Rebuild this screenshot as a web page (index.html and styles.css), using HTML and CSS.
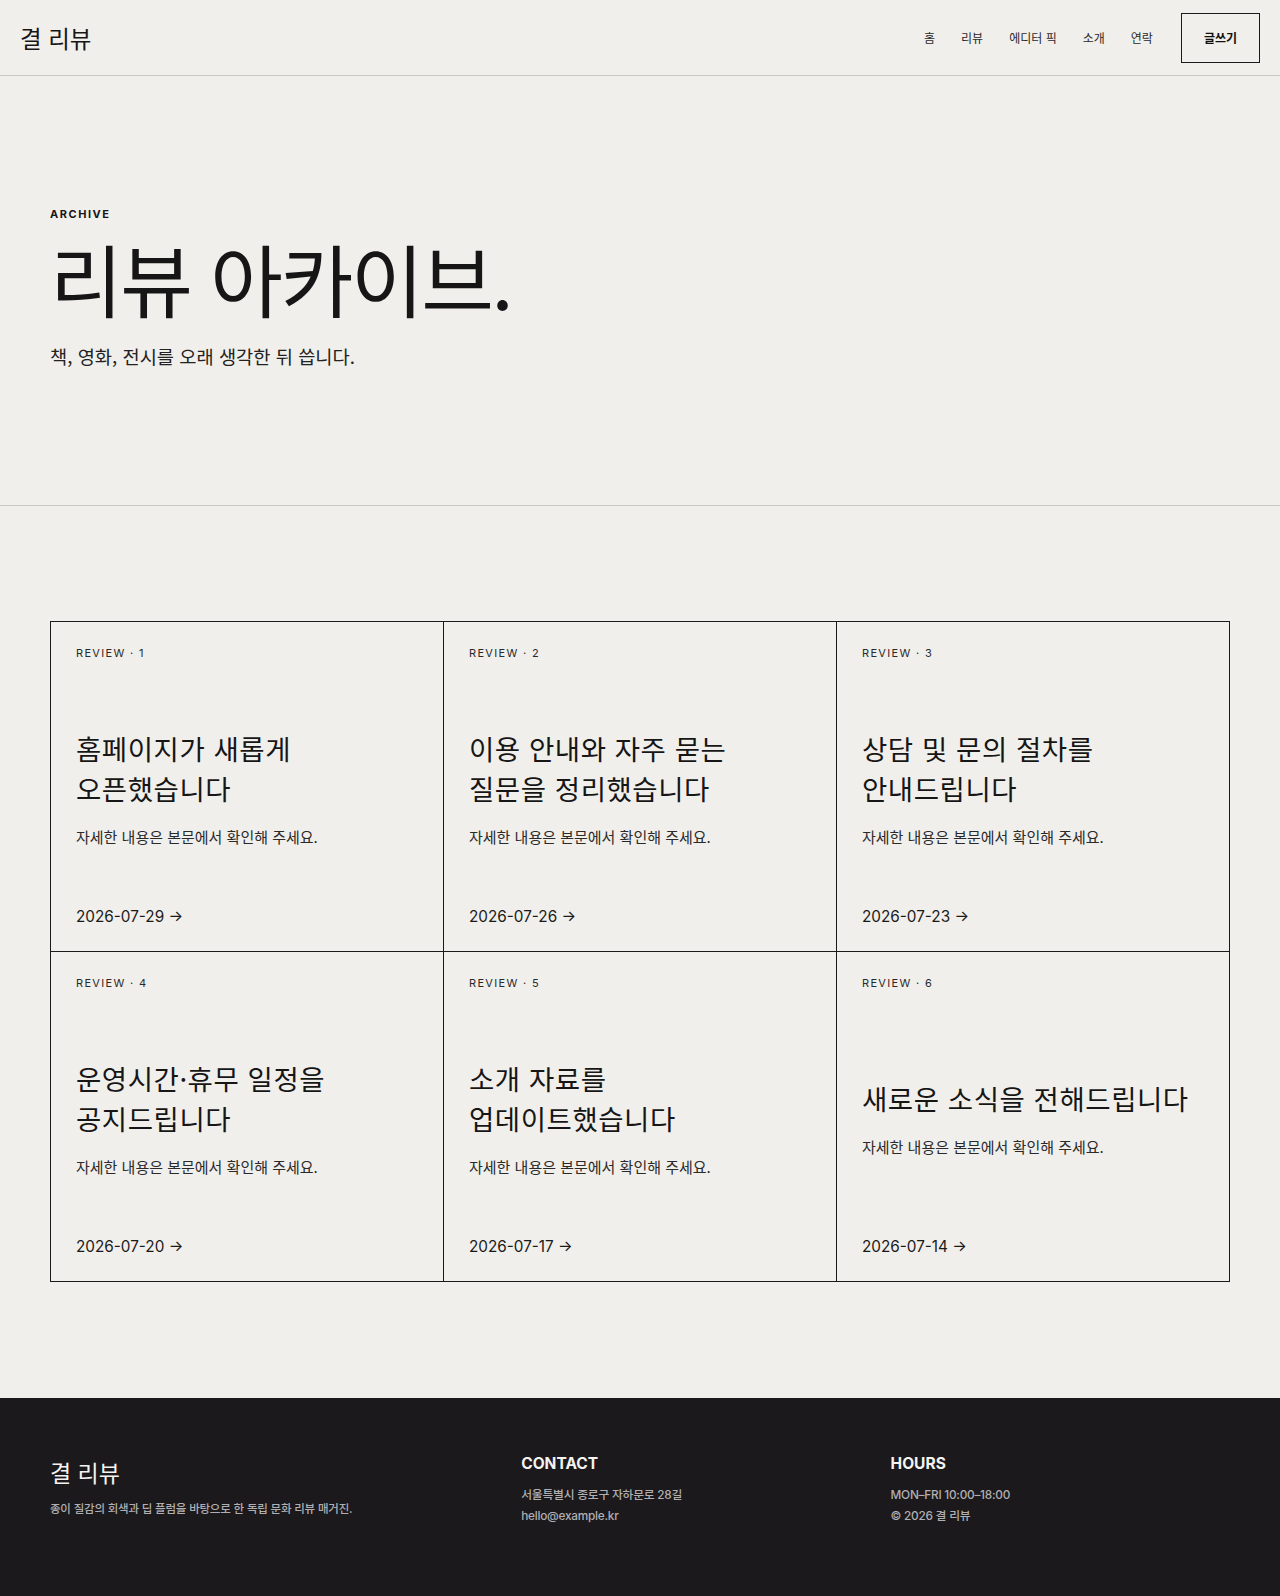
FILE: index.html
```html
<!DOCTYPE html>
<html lang="ko">
<head>
<meta charset="utf-8">
<title>결 리뷰 — 리뷰 아카이브</title>
<link rel="stylesheet" href="styles.css">
</head>
<body>
<header class="site-header">
  <a class="logo" href="#">결 리뷰</a>
  <div class="header-right">
    <nav class="nav">
      <a href="#">홈</a>
      <a href="#">리뷰</a>
      <a href="#">에디터 픽</a>
      <a href="#">소개</a>
      <a href="#">연락</a>
    </nav>
    <a class="write-btn" href="#">글쓰기</a>
  </div>
</header>

<section class="hero">
  <p class="eyebrow">ARCHIVE</p>
  <h1 class="hero-title">리뷰 아카이브.</h1>
  <p class="hero-sub">책, 영화, 전시를 오래 생각한 뒤 씁니다.</p>
</section>

<main class="archive">
  <div class="grid">
    <article class="card">
      <p class="tag">REVIEW · 1</p>
      <div class="card-body">
        <h2 class="card-title">홈페이지가 새롭게<br>오픈했습니다</h2>
        <p class="excerpt">자세한 내용은 본문에서 확인해 주세요.</p>
      </div>
      <p class="date">2026-07-29 →</p>
    </article>
    <article class="card">
      <p class="tag">REVIEW · 2</p>
      <div class="card-body">
        <h2 class="card-title">이용 안내와 자주 묻는<br>질문을 정리했습니다</h2>
        <p class="excerpt">자세한 내용은 본문에서 확인해 주세요.</p>
      </div>
      <p class="date">2026-07-26 →</p>
    </article>
    <article class="card">
      <p class="tag">REVIEW · 3</p>
      <div class="card-body">
        <h2 class="card-title">상담 및 문의 절차를<br>안내드립니다</h2>
        <p class="excerpt">자세한 내용은 본문에서 확인해 주세요.</p>
      </div>
      <p class="date">2026-07-23 →</p>
    </article>
    <article class="card">
      <p class="tag">REVIEW · 4</p>
      <div class="card-body">
        <h2 class="card-title">운영시간·휴무 일정을<br>공지드립니다</h2>
        <p class="excerpt">자세한 내용은 본문에서 확인해 주세요.</p>
      </div>
      <p class="date">2026-07-20 →</p>
    </article>
    <article class="card">
      <p class="tag">REVIEW · 5</p>
      <div class="card-body">
        <h2 class="card-title">소개 자료를<br>업데이트했습니다</h2>
        <p class="excerpt">자세한 내용은 본문에서 확인해 주세요.</p>
      </div>
      <p class="date">2026-07-17 →</p>
    </article>
    <article class="card">
      <p class="tag">REVIEW · 6</p>
      <div class="card-body">
        <h2 class="card-title">새로운 소식을 전해드립니다</h2>
        <p class="excerpt">자세한 내용은 본문에서 확인해 주세요.</p>
      </div>
      <p class="date">2026-07-14 →</p>
    </article>
  </div>
</main>

<footer class="site-footer">
  <div class="footer-brand">
    <p class="footer-logo">결 리뷰</p>
    <p class="footer-text">종이 질감의 회색과 딥 플럼을 바탕으로 한 독립 문화 리뷰 매거진.</p>
  </div>
  <div class="footer-col">
    <h3 class="footer-head">CONTACT</h3>
    <p class="footer-line">서울특별시 종로구 자하문로 28길</p>
    <p class="footer-line">hello@example.kr</p>
  </div>
  <div class="footer-col">
    <h3 class="footer-head">HOURS</h3>
    <p class="footer-line">MON–FRI 10:00–18:00</p>
    <p class="footer-line">© 2026 결 리뷰</p>
  </div>
</footer>
</body>
</html>
```

FILE: styles.css
```css
* {
  box-sizing: border-box;
}

html, body {
  margin: 0;
  padding: 0;
}

body {
  background: #f1efeb;
  color: #1a1a1a;
  font-family: "Inter", "Noto Sans CJK KR", sans-serif;
}

p, h1, h2, h3 {
  margin: 0;
}

a {
  color: inherit;
  text-decoration: none;
}

/* Header */
.site-header {
  height: 76px;
  border-bottom: 1px solid #c9c7c3;
  display: flex;
  align-items: center;
  justify-content: space-between;
  padding: 0 20px;
}

.logo {
  font-family: "Noto Sans CJK KR", sans-serif;
  font-size: 23.5px;
  line-height: 34px;
  color: #161616;
}

.header-right {
  display: flex;
  align-items: center;
  gap: 28px;
}

.nav {
  display: flex;
  gap: 26px;
  font-family: "Noto Sans CJK KR", sans-serif;
  font-size: 12px;
  line-height: 18px;
  color: #2a2a2a;
}

.write-btn {
  display: block;
  border: 1px solid #1a1a1a;
  padding: 15px 22px 15px;
  font-family: "Noto Sans CJK KR", sans-serif;
  font-size: 12px;
  line-height: 18px;
  font-weight: 700;
  color: #111;
}

/* Hero */
.hero {
  padding: 130px 50px 134px;
  border-bottom: 1px solid #c9c7c3;
}

.eyebrow {
  font-size: 11px;
  line-height: 16px;
  font-weight: 700;
  letter-spacing: 0.14em;
  color: #161616;
}

.hero-title {
  margin-top: 13px;
  font-family: "Noto Sans CJK KR", sans-serif;
  font-weight: 400;
  font-size: 79px;
  line-height: 1.1;
  letter-spacing: -0.03em;
  color: #161616;
}

.hero-sub {
  margin-top: 19px;
  font-family: "Noto Sans CJK KR", sans-serif;
  font-size: 18.7px;
  line-height: 1.6;
  color: #222;
}

/* Archive grid */
.archive {
  padding: 115px 50px 116px;
}

.grid {
  display: grid;
  grid-template-columns: repeat(3, 1fr);
  border-top: 1px solid #1a1a1a;
  border-left: 1px solid #1a1a1a;
}

.card {
  min-height: 330px;
  border-right: 1px solid #1a1a1a;
  border-bottom: 1px solid #1a1a1a;
  padding: 24px 25px 22px;
  display: flex;
  flex-direction: column;
  justify-content: space-between;
}

.tag {
  font-size: 11px;
  line-height: 14px;
  letter-spacing: 0.12em;
  color: #2a2a2a;
}

.card-body {
  padding-top: 11px;
}

.card-title {
  font-family: "Noto Sans CJK KR", sans-serif;
  font-weight: 400;
  font-size: 27.5px;
  line-height: 40px;
  letter-spacing: 0.02em;
  color: #161616;
}

.excerpt {
  margin-top: 18px;
  font-family: "Noto Sans CJK KR", sans-serif;
  font-size: 15px;
  line-height: 22px;
  color: #2a2a2a;
}

.date {
  font-size: 15.3px;
  line-height: 24px;
  color: #1a1a1a;
}

/* Footer */
.site-footer {
  background: #1b191c;
  color: #b1afb2;
  padding: 57px 50px 69px;
  display: grid;
  grid-template-columns: 1.3fr 1fr 1fr;
  gap: 30px;
}

.footer-logo {
  font-family: "Noto Sans CJK KR", sans-serif;
  font-size: 23px;
  line-height: 34px;
  color: #f4f3f1;
}

.footer-text {
  margin-top: 10px;
  font-family: "Noto Sans CJK KR", sans-serif;
  font-size: 11.5px;
  line-height: 18px;
  font-weight: 500;
  letter-spacing: -0.02em;
}

.footer-head {
  font-size: 15.5px;
  line-height: 19px;
  font-weight: 700;
  color: #f4f3f1;
  margin-top: -1px;
  margin-bottom: 12px;
}

.footer-line {
  font-size: 11.8px;
  line-height: 21px;
  font-weight: 500;
  letter-spacing: -0.02em;
}
```
